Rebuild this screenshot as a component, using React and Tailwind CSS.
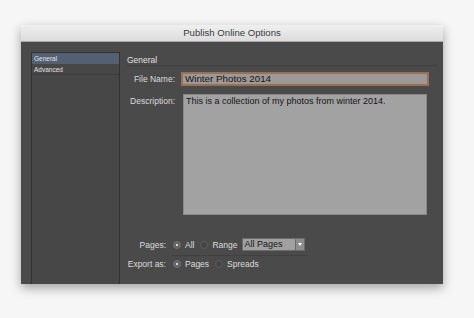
const Radio = ({ checked }) => (
  <span
    className={`flex items-center justify-center w-[8px] h-[8px] rounded-full border ${
      checked ? "bg-[#646465] border-[#707071]" : "bg-[#454546] border-[#5c5c5d]"
    }`}
  >
    {checked && <span className="w-[2px] h-[2px] rounded-full bg-white" />}
  </span>
);

const App = () => {
  const font = { fontFamily: '"Liberation Sans", Arial, sans-serif' };

  return (
    <div className="w-[474px] h-[318px] bg-[#f6f6f6] pt-[25px] pl-[21px]" style={font}>
      <div className="w-[422px] shadow-[0_4px_10px_rgba(0,0,0,0.35)]">
        {/* Title bar */}
        <div className="h-[17px] flex items-center justify-center bg-gradient-to-b from-[#efefef] to-[#dcdcdc] border-b border-[#a9a9a9] rounded-t-[3px]">
          <span className="text-[9.6px] text-[#3a3a3a] leading-none">Publish Online Options</span>
        </div>

        {/* Body */}
        <div className="h-[242px] bg-[#4a4a4b] flex pl-[10px] pt-[10px]">
          {/* Sidebar */}
          <div className="w-[89px] border-x border-t border-[#323233] bg-[#474748] flex flex-col">
            <div className="h-[11px] bg-[#536073] text-[6.5px] text-[#e6e6e6] leading-[11px] pl-[2px]">General</div>
            <div className="h-[11px] text-[6.5px] text-[#e2e2e2] leading-[11px] pl-[2px] border-b border-[#3a3a3b]">Advanced</div>
          </div>

          {/* Content */}
          <div className="w-[316px] ml-[7px] pr-[6px] pt-[2px] text-[#dcdcdc] leading-[12px]">
            <div className="h-[12px] text-[8.5px] leading-[12px] border-b border-[#3d3d3e] text-[#e0e0e0]">General</div>

            <div className="flex items-center mt-[6px]">
              <div className="w-[48px] text-right text-[8.5px]">File Name:</div>
              <div className="ml-[6px] w-[248px] h-[14px] border-2 border-[#9b6f52] bg-[#9d9998] flex items-center pl-[2px]">
                <span className="text-[9.8px] text-[#151515] leading-none">Winter Photos 2014</span>
              </div>
            </div>

            <div className="flex items-start mt-[8px]">
              <div className="w-[48px] text-right text-[8.5px] leading-[12px] pt-[1px]">Description:</div>
              <div className="ml-[8px] w-[244px] h-[121px] bg-[#a3a2a3] border border-[#8a898a] pl-[2px] pt-[1px] text-[9px] leading-[11px] text-[#151515]">
                This is a collection of my photos from winter 2014.
              </div>
            </div>

            <div className="flex items-center mt-[23px] h-[13px] text-[8.5px]">
              <div className="w-[39px] text-right">Pages:</div>
              <div className="ml-[7px] flex items-center gap-[4px]">
                <Radio checked />
                <span>All</span>
              </div>
              <div className="ml-[6px] flex items-center gap-[4px]">
                <Radio />
                <span>Range</span>
              </div>
              <div className="ml-[4px] w-[63px] h-[13px] flex border border-[#6b6b6b] bg-[#a2a1a2]">
                <span className="flex-1 text-[9px] text-[#151515] leading-[11px] pl-[2px]">All Pages</span>
                <span className="w-[9px] flex items-center justify-center bg-[#8e8d8e] border-l border-[#6b6b6b]">
                  <span className="w-0 h-0 border-l-[2.5px] border-r-[2.5px] border-t-[3px] border-l-transparent border-r-transparent border-t-white" />
                </span>
              </div>
            </div>

            <div className="ml-[44px] w-[137px] mt-[4px] border-t border-[#404041]" />

            <div className="flex items-center mt-[1px] h-[13px] text-[8.5px]">
              <div className="w-[39px] text-right">Export as:</div>
              <div className="ml-[7px] flex items-center gap-[4px]">
                <Radio checked />
                <span>Pages</span>
              </div>
              <div className="ml-[6px] flex items-center gap-[4px]">
                <Radio />
                <span>Spreads</span>
              </div>
            </div>
          </div>
        </div>
      </div>
    </div>
  );
};

export default App;
